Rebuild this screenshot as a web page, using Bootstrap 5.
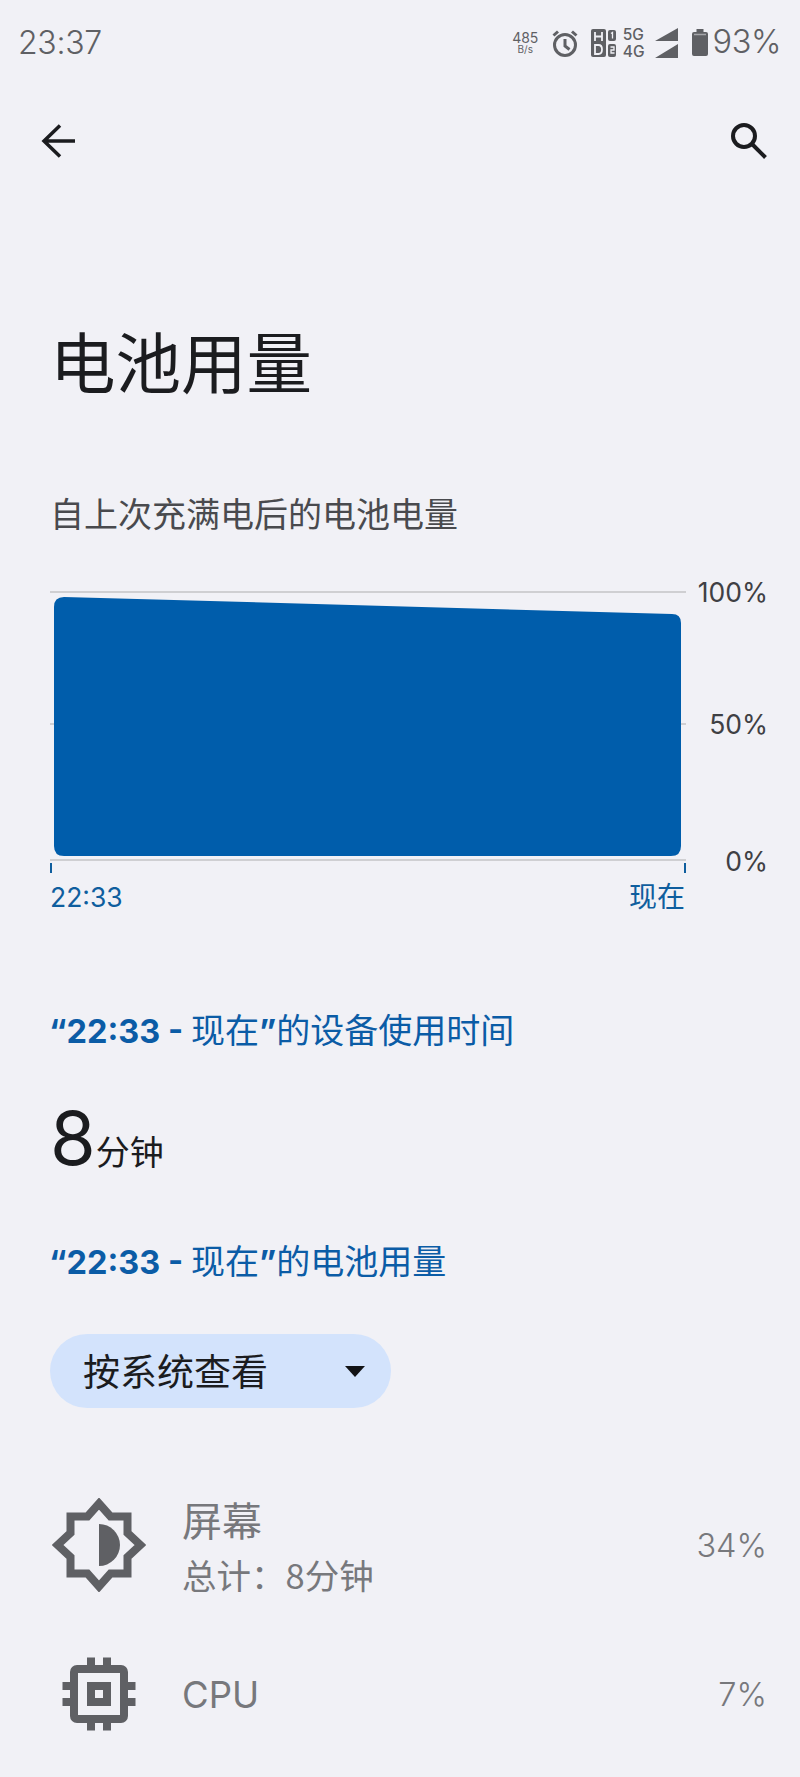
<!DOCTYPE html>
<html lang="zh-CN">
<head>
<meta charset="utf-8">
<title>电池用量</title>
<link href="https://cdn.jsdelivr.net/npm/bootstrap@5.3.0/dist/css/bootstrap.min.css" rel="stylesheet">
<style>
html,body{height:1777px;overflow:hidden}
body{background:#f1f1f6;font-family:Inter,"Noto Sans CJK SC",sans-serif;color:#1b1c1f;width:800px}
.stat-bar{height:85px;padding:0 19px 0 18px;color:#5f6064}
.stat-time{font-size:32px;font-weight:300;line-height:1;letter-spacing:-.3px}
.stat-speed{font-size:14px;line-height:13px;text-align:center;width:27px;margin-right:13px}
.stat-speed span{display:block;font-size:10px;line-height:10px}
.gap-alarm{margin-right:13px}
.gap-sim{margin-right:7px}
.net-lbl{font-size:15.500px;line-height:17px;font-weight:500;margin-right:10px}
.gap-sig{margin-right:14px}
.gap-bat{margin-right:5px}
.stat-pct{font-size:32.500px;font-weight:300;line-height:1;letter-spacing:-.4px}
.tool-row{height:110px;padding:2px 33px 0 41px}
.page-title{font-size:65.5px;font-weight:400;line-height:1;margin:0 0 0 50px;padding-top:132px;height:298px;font-family:"Noto Sans CJK SC",sans-serif}
.sub-head{font-size:34px;line-height:40px;margin:0 0 0 50px;color:#494a4e;font-weight:400;font-family:"Noto Sans CJK SC",sans-serif}
.chart-area{margin-top:58px;padding-left:50px;height:290px}
.chart-svg{width:640px;height:282px;flex:none;display:block}
.axis-col{width:78px;color:#3f4044;font-size:26.500px;line-height:30px;text-align:right;margin-top:-14px}
.axis-b{margin-top:102px}
.axis-c{margin-top:107px}
.time-row{width:635px;margin:0 0 0 50px;color:#0f5e9e;font-size:26.500px;line-height:32px}
.time-cjk{font-size:28px}
.use-head{font-size:34px;line-height:40px;color:#0b5ca6;margin:0 0 0 49px;font-family:"Noto Sans CJK SC",sans-serif}
.use-head b{font-family:Inter,"Noto Sans CJK SC",sans-serif;font-weight:700;font-size:32.500px}
.use-one{margin-top:96px}
.dur-line{margin:46px 0 0 50px;line-height:80px;height:80px;font-family:"Noto Sans CJK SC",sans-serif}
.dur-big{font-size:74px;font-family:Inter,sans-serif;font-weight:400}
.dur-unit{font-size:34px}
.use-two{margin-top:62px}
.pill-btn{width:341px;height:74px;border-radius:37px;background:#d3e3fc;margin:51px 0 0 50px;padding:0 26px 0 33px;font-size:37px;font-family:"Noto Sans CJK SC",sans-serif;color:#1b1c1f;border:0}
.caret-tri{width:0;height:0;border-left:10px solid transparent;border-right:10px solid transparent;border-top:11px solid #121316}
.rows{margin-top:62px}
.row-item{padding:0 33px 0 52px;color:#77787c;height:149px}
.row-ico{width:130px;flex:none}
.ico-svg{display:block}
.row-text{margin-top:8px}
.row-name{font-size:40px;line-height:50px;font-family:"Noto Sans CJK SC",sans-serif}
.row-sub{font-size:34.500px;line-height:60px;font-family:"Noto Sans CJK SC",sans-serif}
.row-val{font-size:32.500px;font-weight:300;margin-top:3px}
.row-cpu{font-size:36.500px;font-weight:400;font-family:Inter,sans-serif;margin-top:4px}
</style>
</head>
<body>
<div class="stat-bar d-flex align-items-center justify-content-between">
  <div class="stat-time">23:37</div>
  <div class="d-flex align-items-center">
    <div class="stat-speed">485<span>B/s</span></div>
    <svg width="26" height="28" viewBox="0 0 26 28" class="gap-alarm" fill="none" stroke="#5f6064" stroke-width="3"><circle cx="13" cy="16" r="10.500"/><path d="M13 10v7l4.500 3.500M1.500 6.500L6 2.500M24.500 6.500L20 2.500"/></svg>
    <svg width="25" height="28" viewBox="0 0 25 28" class="gap-sim"><rect x="0" y="0" width="15" height="28" rx="2" fill="#5f6064"/><rect x="17" y="1" width="8" height="11" rx="2" fill="#5f6064"/><rect x="17" y="15" width="8" height="13" rx="2" fill="#5f6064"/><path d="M4 3v9M11 3v9M4 7.500h7M4 16v9h3.500q3.500 0 3.500-4.500t-3.500-4.500z" stroke="#f1f1f6" stroke-width="1.800" fill="none"/><path d="M20 4.500l1.500-1v6M19.500 18h3.500v3h-3v3h3.500" stroke="#f1f1f6" stroke-width="1.300" fill="none"/></svg>
    <div class="net-lbl">5G<br>4G</div>
    <svg width="23" height="30" viewBox="0 0 23 30" class="gap-sig"><path d="M0 13L23 0v13zM0 30L23 16v14z" fill="#5f6064"/></svg>
    <svg width="16" height="27" viewBox="0 0 16 27" class="gap-bat"><path d="M4.500 0h7v3h2.500q2 0 2 2v20q0 2-2 2H2q-2 0-2-2V5q0-2 2-2h2.500z" fill="#5f6064"/><path d="M2 5.500h12" stroke="#a5a6aa" stroke-width="1.500"/></svg>
    <div class="stat-pct">93%</div>
  </div>
</div>
<div class="tool-row d-flex align-items-center justify-content-between">
  <svg width="34" height="34" viewBox="0 0 34 34" fill="none" stroke="#1b1c1f" stroke-width="3.500"><path d="M34 17H3M19 1.500L3 17l16 15.500"/></svg>
  <svg width="36" height="36" viewBox="0 0 36 36" fill="none" stroke="#1b1c1f" stroke-width="4"><circle cx="13" cy="13" r="11"/><path d="M21 21L34.500 34.500"/></svg>
</div>
<h1 class="page-title">电池用量</h1>
<p class="sub-head">自上次充满电后的电池电量</p>
<div class="chart-area d-flex">
  <svg class="chart-svg" viewBox="0 0 640 282">
    <path d="M0 1H636M0 133H4M631 133H636M0 269H636" stroke="#cfcfd2" stroke-width="2" fill="none"/>
    <path d="M4 16q0-10 10-10L622 23q9 0 9 9V255q0 10-10 10H14q-10 0-10-10z" fill="#005dab"/>
    <path d="M1 272v10M635 272v10" stroke="#0f5e9e" stroke-width="2"/>
  </svg>
  <div class="axis-col d-flex flex-column">
    <div>100%</div>
    <div class="axis-b">50%</div>
    <div class="axis-c">0%</div>
  </div>
</div>
<div class="time-row d-flex justify-content-between align-items-center"><span>22:33</span><span class="time-cjk">现在</span></div>
<p class="use-head use-one"><b>“22:33 - </b>现在<b>”</b>的设备使用时间</p>
<div class="dur-line"><span class="dur-big">8</span><span class="dur-unit">分钟</span></div>
<p class="use-head use-two"><b>“22:33 - </b>现在<b>”</b>的电池用量</p>
<button class="pill-btn d-flex align-items-center justify-content-between"><span>按系统查看</span><span class="caret-tri"></span></button>
<div class="rows">
  <div class="row-item d-flex align-items-center">
    <div class="row-ico"><svg class="ico-svg" width="94" height="94" viewBox="0 0 94 94" fill="none"><path d="M47 5.500L58.500 18.500H75.500V35L88.500 47L75.500 59V75.500H58.500L47 88.500L35.500 75.500H18.500V59L5.500 47L18.500 35V18.500H35.500Z" stroke="#5f6064" stroke-width="8"/><path d="M47 26a21 21 0 0 1 0 42z" fill="#5f6064"/></svg></div>
    <div class="flex-grow-1 row-text"><div class="row-name">屏幕</div><div class="row-sub">总计：8分钟</div></div>
    <div class="row-val">34%</div>
  </div>
  <div class="row-item d-flex align-items-center">
    <div class="row-ico"><svg class="ico-svg" width="94" height="94" viewBox="0 0 94 94" fill="none"><rect x="22" y="22" width="50" height="50" rx="3" stroke="#5f6064" stroke-width="8"/><path d="M35 35h24v24H35zM43 43v8h8v-8z" fill="#5f6064" fill-rule="evenodd"/><path d="M39 10.500v10M55 10.500v10M39 73.500v10M55 73.500v10M10.500 39h10M10.500 55h10M73.500 39h10M73.500 55h10" stroke="#5f6064" stroke-width="8"/></svg></div>
    <div class="flex-grow-1 row-cpu">CPU</div>
    <div class="row-val">7%</div>
  </div>
</div>
</body>
</html>
